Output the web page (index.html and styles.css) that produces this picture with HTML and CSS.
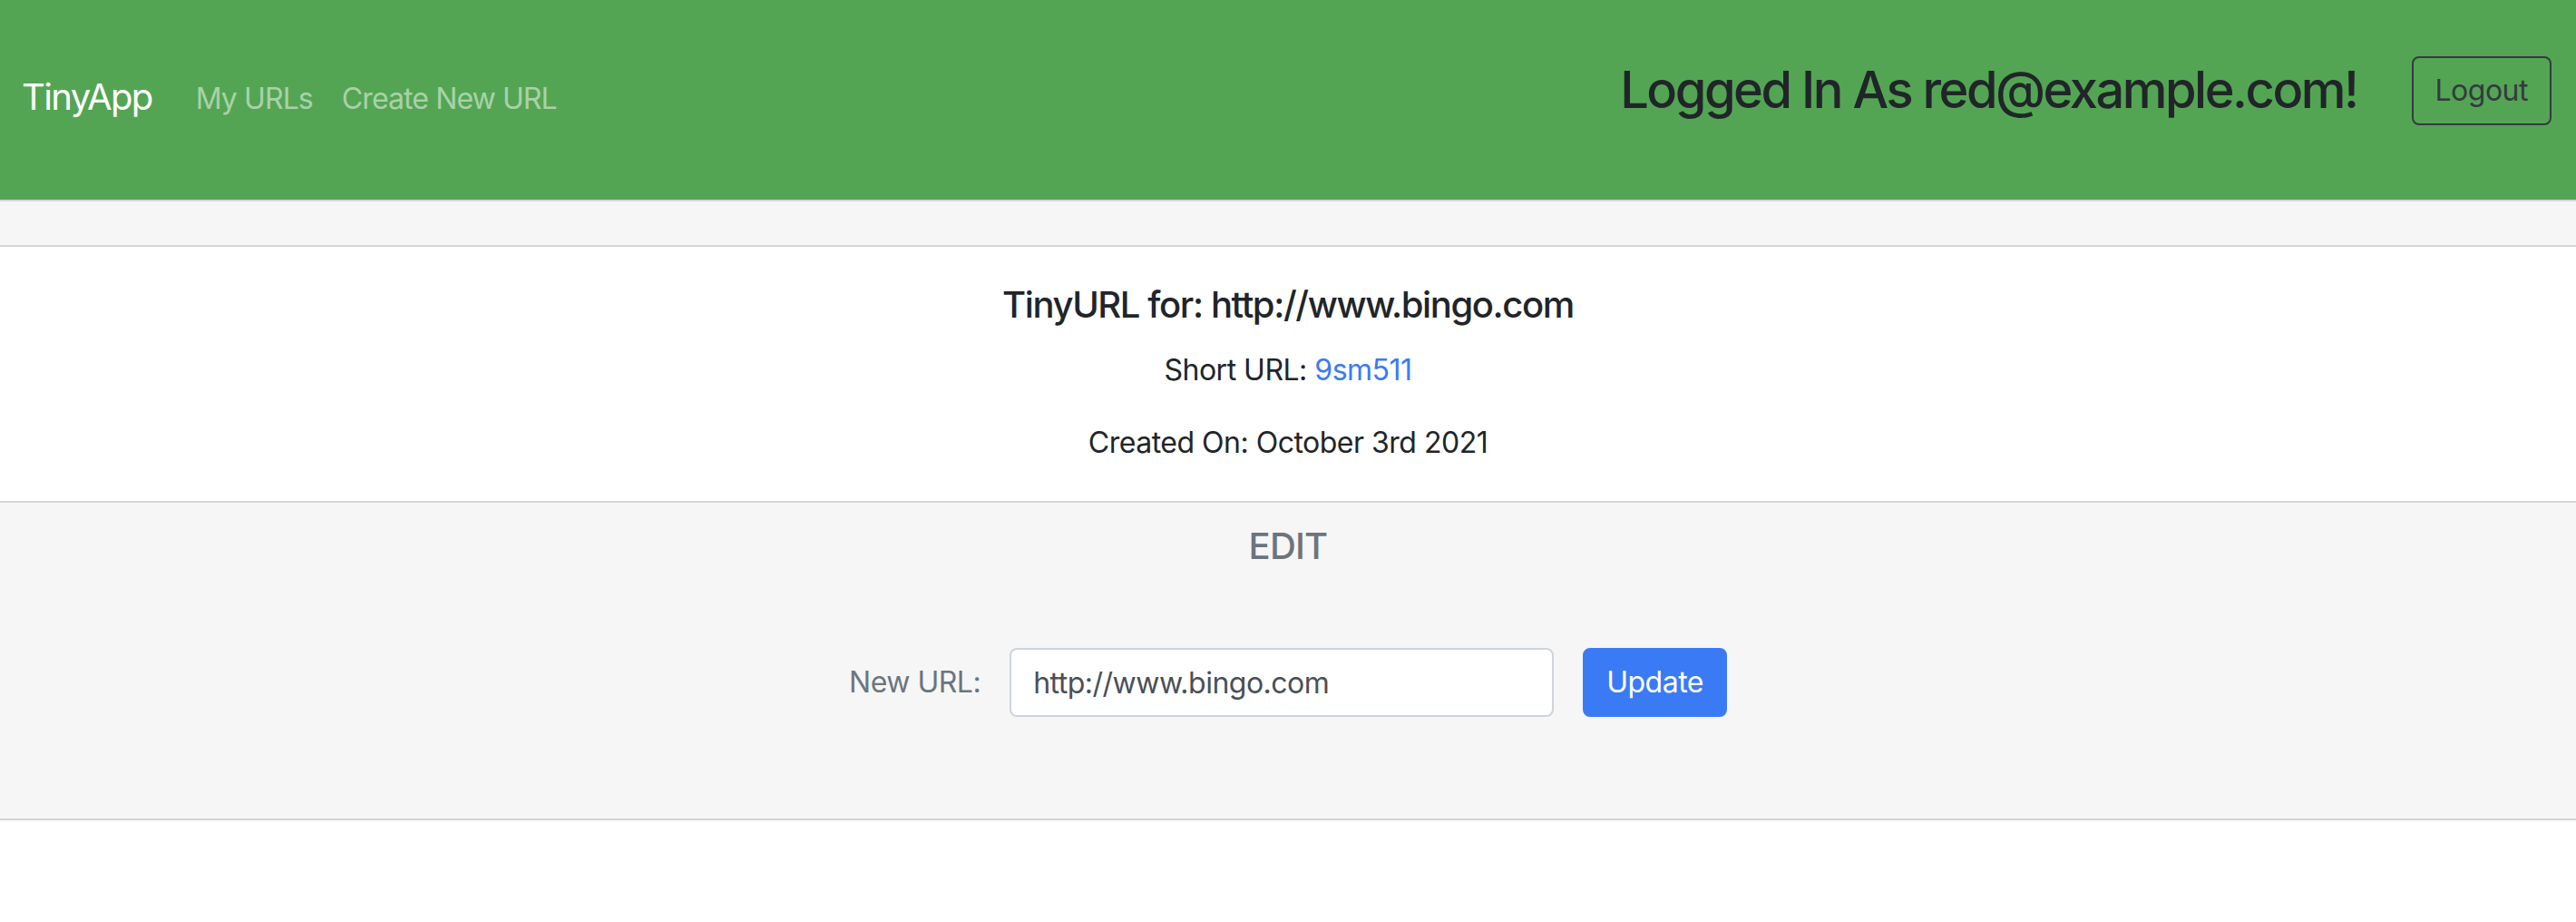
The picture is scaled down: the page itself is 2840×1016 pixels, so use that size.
FILE: index.html
```html
<!DOCTYPE html>
<html lang="en">
<head>
<meta charset="utf-8">
<title>TinyApp</title>
<link rel="stylesheet" href="styles.css">
</head>
<body>
<nav class="navbar">
  <a class="brand" href="#">TinyApp</a>
  <ul class="nav-links">
    <li><a class="nav-link" href="#">My URLs</a></li>
    <li><a class="nav-link" href="#">Create New URL</a></li>
  </ul>
  <div class="user">
    <h3 class="user-greeting">Logged In As red@example.com!</h3>
    <button class="btn-logout" type="button">Logout</button>
  </div>
</nav>
<main class="card">
  <div class="card-header"></div>
  <div class="card-body">
    <h5 class="card-title">TinyURL for: http://www.bingo.com</h5>
    <p class="card-text">Short URL: <a class="short-link" href="#">9sm511</a></p>
    <p class="card-text">Created On: October 3rd 2021</p>
  </div>
  <div class="card-footer">
    <h5 class="edit-title">EDIT</h5>
    <form class="edit-form">
      <label class="edit-label" for="longURL">New URL:</label>
      <input class="edit-input" id="longURL" type="text" value="http://www.bingo.com">
      <button class="btn-update" type="submit">Update</button>
    </form>
  </div>
</main>
</body>
</html>
```
FILE: styles.css
```css
* { box-sizing: border-box; }
html, body { margin: 0; padding: 0; }
body {
  font-family: Inter, "Noto Sans", "Liberation Sans", sans-serif;
  font-size: 32px;
  line-height: 1.5;
  letter-spacing: -0.5px;
  color: #212529;
  background: #fff;
}

.navbar {
  display: flex;
  align-items: center;
  height: 220px;
  padding: 0 27px 0 24px;
  background: #53a553;
}
.brand {
  font-size: 40px;
  line-height: 60px;
  letter-spacing: -1.6px;
  color: #fff;
  text-decoration: none;
  margin-right: 32px;
  margin-bottom: 6px;
}
.nav-links {
  display: flex;
  list-style: none;
  margin: 0;
  padding: 0;
}
.nav-link {
  display: block;
  padding: 0 16px;
  line-height: 48px;
  letter-spacing: -0.9px;
  color: rgba(255, 255, 255, 0.5);
  text-decoration: none;
  margin-bottom: 2px;
}
.user {
  margin-left: auto;
  display: flex;
  align-items: center;
}
.user-greeting {
  margin: 0 60px 20px 0;
  font-size: 56px;
  font-weight: 550;
  line-height: 1.2;
  letter-spacing: -2.5px;
  color: #212529;
}
.btn-logout {
  font-family: inherit;
  font-size: 32px;
  line-height: 48px;
  letter-spacing: -0.5px;
  padding: 12px 24px;
  height: 76px;
  color: #343a40;
  background: transparent;
  border: 2px solid #343a40;
  border-radius: 8px;
  margin-bottom: 21px;
}

.card {
  display: flex;
  flex-direction: column;
  border-top: 2px solid #d6d6d6;
  border-bottom: 2px solid #d6d6d6;
  text-align: center;
}
.card-header {
  height: 50px;
  background: #f6f6f6;
  border-bottom: 2px solid #d6d6d6;
}
.card-body {
  padding: 40px;
}
.card-title {
  margin: 0 0 24px;
  font-size: 40px;
  font-weight: 500;
  line-height: 1.2;
  letter-spacing: -1.4px;
}
.card-text {
  margin: 0 0 32px;
}
.card-text:last-child { margin-bottom: 0; }
.short-link {
  color: #3a7bf5;
  text-decoration: none;
}
.card-footer {
  background: #f6f6f6;
  border-top: 2px solid #d6d6d6;
  padding: 24px 40px;
}
.edit-title {
  margin: 0;
  font-size: 40px;
  font-weight: 500;
  line-height: 1.2;
  letter-spacing: -0.8px;
  color: #6c757d;
}
.edit-form {
  display: flex;
  justify-content: center;
  align-items: center;
  padding: 88px 0 88px;
}
.edit-label {
  color: #6c757d;
  margin-right: 32px;
}
.edit-input {
  width: 600px;
  height: 76px;
  padding: 12px 24px;
  font-family: inherit;
  font-size: 32px;
  line-height: 48px;
  letter-spacing: -0.5px;
  color: #495057;
  background: #fff;
  border: 2px solid #ced4da;
  border-radius: 8px;
}
.btn-update {
  margin-left: 32px;
  height: 76px;
  padding: 12px 24px;
  font-family: inherit;
  font-size: 32px;
  line-height: 48px;
  letter-spacing: -0.5px;
  color: #fff;
  background: #3a7bf5;
  border: 2px solid #3a7bf5;
  border-radius: 8px;
}
```
